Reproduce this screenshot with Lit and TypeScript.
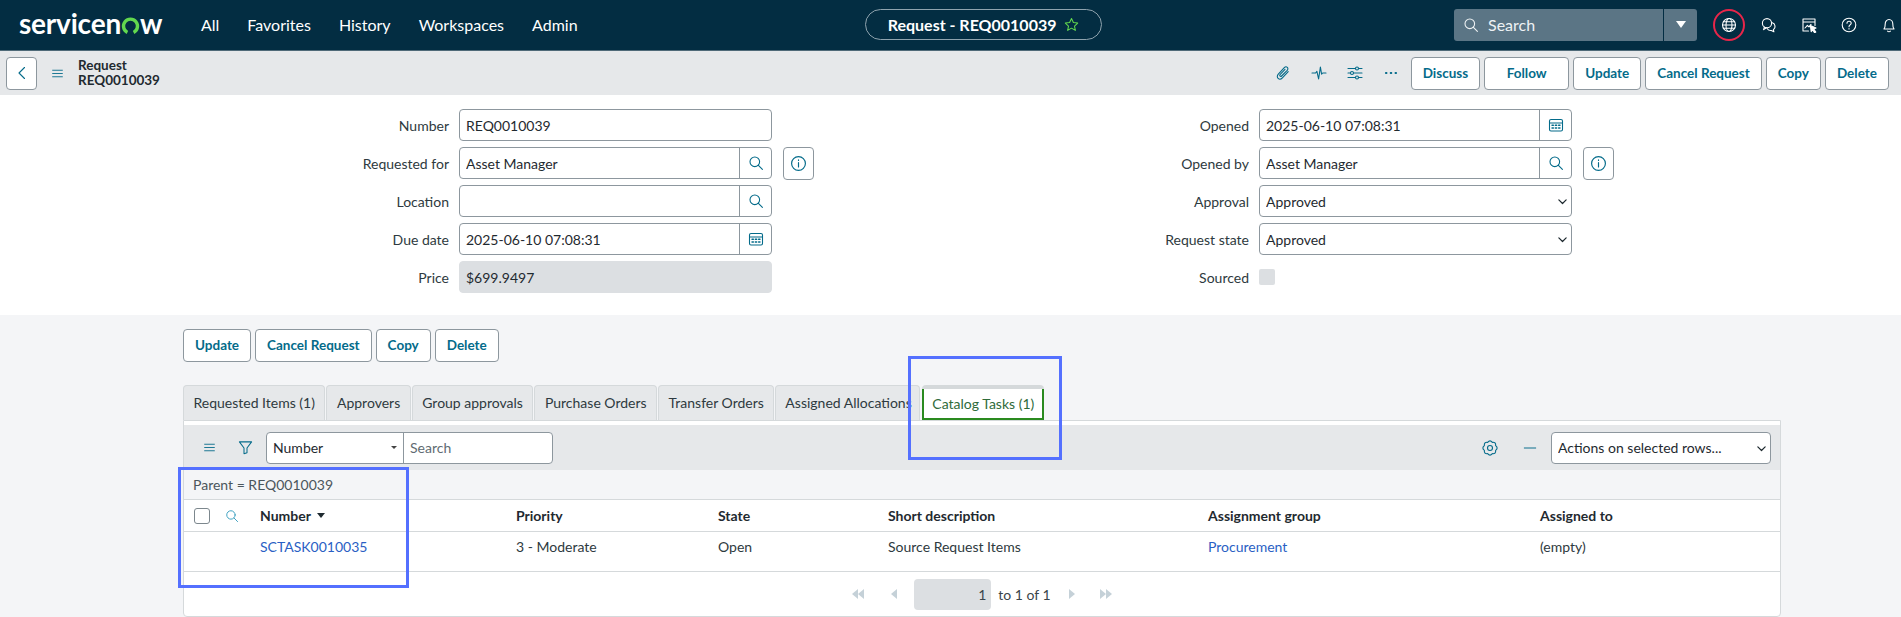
import { LitElement, html, css, svg } from 'lit';
import { customElement } from 'lit/decorators.js';

const ic = (body: unknown, size = 16, cls = '') => html`<svg class="ic ${cls}" width=${size} height=${size} viewBox="0 0 16 16" fill="none" stroke="currentColor" stroke-width="1.1" stroke-linecap="round" stroke-linejoin="round">${body}</svg>`;

// scalloped outline for the list settings icon
const gearPath = () => {
  const pt = (deg: number, r: number) => {
    const a = (deg * Math.PI) / 180;
    return `${(8 + r * Math.cos(a)).toFixed(2)} ${(8 + r * Math.sin(a)).toFixed(2)}`;
  };
  let d = `M${pt(-22.5, 6.1)}`;
  for (let i = 0; i < 8; i++) d += `Q${pt(i * 45, 8.6)} ${pt(i * 45 + 22.5, 6.1)}`;
  return d + 'Z';
};

const icons = {
  back: svg`<path d="M10.5 2.5 5 8l5.5 5.5"/>`,
  menu: svg`<path d="M2 4h12M2 8h12M2 12h12"/>`,
  search: svg`<circle cx="6.8" cy="6.8" r="4.8"/><path d="m10.4 10.4 4 4"/>`,
  calendar: svg`<rect x="1.5" y="2.5" width="13" height="11.5" rx="1.5"/><path d="M1.5 6h13"/><path d="M4 8.3h1.4M7.3 8.3h1.4M10.6 8.3H12M4 11h1.4M7.3 11h1.4M10.6 11H12" stroke-width="1.4"/>`,
  info: svg`<circle cx="8" cy="8" r="6.5"/><path d="M8 7.2v4M8 4.6v.5"/>`,
  clip: svg`<path d="M13.2 6.6 7.4 12.9c-1.3 1.4-3.2 1.5-4.3.5s-1.1-2.8.2-4.2l6-6.5c.9-1 2.2-1.1 3-.4s.8 2-.1 3L6.6 11c-.5.5-1.1.6-1.5.2s-.4-1-.1-1.5l5-5.4"/>`,
  pulse: svg`<path d="M1 8h3.6l1.3-1.6L7.6 14 9.4 2l1.2 7.2L11.7 8H15"/>`,
  sliders: svg`<path d="M1 3.5h7.5M11.5 3.5H15M1 8h2.5M6.5 8H15M1 12.5h7.5M11.5 12.5H15"/><circle cx="10" cy="3.5" r="1.5"/><circle cx="5" cy="8" r="1.5"/><circle cx="10" cy="12.5" r="1.5"/>`,
  more: svg`<path d="M3 8h.4M7.8 8h.4M12.6 8h.4" stroke-width="2.2"/>`,
  globe: svg`<circle cx="8" cy="8" r="6.5"/><ellipse cx="8" cy="8" rx="3" ry="6.5"/><path d="M1.5 8h13M2.4 4.8h11.2M2.4 11.2h11.2"/>`,
  chat: svg`<circle cx="6" cy="6.2" r="4.6"/><path d="M3.4 10 2.6 12.6 5.6 10.8"/><path d="M11.4 5.8a4 4 0 0 1 1 7l.5 2-2.6-1.3a4 4 0 0 1-4-1.8"/>`,
  win: svg`<path d="M7.5 14H2V2h12v6.5M2 5h12"/><path d="M4 11l2.4-2.6 1.6 1.4L10 7.4"/><path d="M9.4 8.6 15 11l-2.4.9L14.8 15l-1.2.8-2-3-1.4 1.8Z" fill="currentColor"/>`,
  help: svg`<circle cx="8" cy="8" r="6.8"/><path d="M6 6.2c0-2.6 4.2-2.6 4.2 0 0 1.7-2.2 1.7-2.2 3.5M8 11.6v.4"/>`,
  bell: svg`<path d="M3 12c1-1 1.2-2 1.2-5 0-2.5 1.6-4.5 3.8-4.5s3.8 2 3.8 4.5c0 3 .2 4 1.2 5Z"/><path d="M6.6 14.2c.7.7 2.1.7 2.8 0"/>`,
  star: svg`<path d="m8 1.6 2 4.3 4.6.6-3.4 3.2.9 4.6L8 11.9l-4.1 2.4.9-4.6-3.4-3.2 4.6-.6Z"/>`,
  filter: svg`<path d="M1.5 2h13L9.6 8.6v4.9L6.4 14.6V8.6Z"/>`,
  gear: svg`<path d=${gearPath()}/><circle cx="8" cy="8" r="2.5"/>`,
  minus: svg`<path d="M1.5 8h13"/>`,
  chevron: svg`<path d="m3.5 6 4.5 4.5L12.5 6" stroke-width="1.5"/>`,
};

const nav = ['All', 'Favorites', 'History', 'Workspaces', 'Admin'];
const topActions = ['Discuss', 'Follow', 'Update', 'Cancel Request', 'Copy', 'Delete'];
const bottomActions = ['Update', 'Cancel Request', 'Copy', 'Delete'];
const tabs = ['Requested Items (1)', 'Approvers', 'Group approvals', 'Purchase Orders', 'Transfer Orders', 'Assigned Allocations'];
const cols = ['Priority', 'State', 'Short description', 'Assignment group', 'Assigned to'];

@customElement('app-root')
export class AppRoot extends LitElement {
  static styles = css`
    :host {
      display: block;
      height: 617px;
      overflow: hidden;
      position: relative;
      background: #f4f5f7;
      font-family: Lato, "Open Sans", sans-serif;
      font-size: 14px;
      color: #2e3a40;
    }
    .ic { display: block; flex: none; }

    /* top bar */
    .top {
      height: 51px;
      box-sizing: border-box;
      background: #032d42;
      border-bottom: 1px solid #4f6a78;
      color: #fff;
      display: flex;
      align-items: center;
      padding: 0 0 1px 19px;
    }
    .logo {
      width: 148px;
      font-size: 28px;
      font-weight: 700;
      letter-spacing: -0.2px;
      display: flex;
      align-items: center;
      line-height: 1;
      margin-top: -3px;
    }
    .logo svg { margin: 4px 0 0 0; }
    .nav { display: flex; gap: 28px; margin-left: 34px; font-size: 16px; margin-top: -1px; }
    .pill {
      margin-left: 287px;
      width: 237px;
      height: 31px;
      box-sizing: border-box;
      border: 1px solid #8fa3ae;
      border-radius: 16px;
      display: flex;
      align-items: center;
      justify-content: center;
      gap: 7px;
      font-size: 16px;
      font-weight: 700;
    }
    .pill .ic { color: #62d84e; }
    .right { margin-left: auto; display: flex; align-items: center; }
    .search {
      width: 209px;
      height: 32px;
      box-sizing: border-box;
      background: #5b7585;
      border-radius: 3px 0 0 3px;
      display: flex;
      align-items: center;
      gap: 9px;
      padding-left: 9px;
      font-size: 16px;
      color: #eef2f4;
    }
    .search-more {
      width: 33px;
      height: 32px;
      margin-left: 1px;
      background: #5b7585;
      border-radius: 0 3px 3px 0;
      display: flex;
      align-items: center;
      justify-content: center;
    }
    .tri { width: 0; height: 0; border: 5px solid transparent; border-top: 7px solid #fff; border-bottom: 0; }
    .tools { display: flex; align-items: center; margin-left: 16px; gap: 24px; padding-right: 4px; }
    .globe {
      width: 32px;
      height: 32px;
      margin-right: -8px;
      box-sizing: border-box;
      border: 2px solid #e8264a;
      border-radius: 50%;
      display: flex;
      align-items: center;
      justify-content: center;
    }

    /* form header */
    .sub {
      height: 44px;
      background: #e6e8ea;
      display: flex;
      align-items: center;
      padding: 0 12px 0 6px;
      box-sizing: border-box;
    }
    .btn {
      height: 33px;
      box-sizing: border-box;
      padding: 0 11px 1px;
      border: 1px solid #8d979e;
      border-radius: 4px;
      background: #fff;
      color: #046b8a;
      font: 700 13.5px Lato, sans-serif;
    }
    .btn.wide { width: 85px; }
    .square {
      width: 31px;
      padding: 0;
      display: flex;
      align-items: center;
      justify-content: center;
    }
    .sub .menu { margin: 0 14px 0 14px; color: #046b8a; }
    .title { font-weight: 700; font-size: 13.5px; line-height: 15.5px; color: #1f2a30; }
    .sub-icons { margin-left: auto; display: flex; align-items: center; gap: 20px; margin-right: 12px; color: #046b8a; }
    .actions { display: flex; gap: 4px; }

    /* form */
    .form {
      background: #fff;
      padding: 14px 0 22px;
      display: grid;
      grid-template-columns: 950px 1fr;
    }
    .col { display: flex; flex-direction: column; gap: 6px; }
    .row { display: flex; align-items: center; height: 32px; }
    .row label { text-align: right; margin-right: 10px; flex: none; }
    .left label { width: 449px; }
    .rightcol label { width: 299px; }
    .ctl {
      position: relative;
      width: 313px;
      height: 32px;
      box-sizing: border-box;
      display: flex;
      border: 1px solid #8d979e;
      border-radius: 4px;
      background: #fff;
      overflow: hidden;
    }
    .ctl input, .ctl select {
      flex: 1;
      min-width: 0;
      border: 0;
      outline: 0;
      padding: 0 6px;
      background: none;
      font: 14px Lato, sans-serif;
      color: #1f2a30;
      appearance: none;
    }
    .ctl .add {
      width: 31px;
      border-left: 1px solid #8d979e;
      display: flex;
      align-items: center;
      justify-content: center;
      color: #046b8a;
    }
    .ctl .caret { position: absolute; right: 2px; top: 9px; color: #1f2a30; }
    .ctl.off { background: #dcdfe2; border-color: #dcdfe2; }
    .info { margin-left: 11px; color: #046b8a; }
    .check { width: 16px; height: 16px; background: #dcdfe2; border-radius: 2px; }

    /* related lists */
    .lower { padding: 14px 120px 0 183px; }
    .lower .actions { gap: 4px; margin-bottom: 23px; }
    .tabs { display: flex; gap: 1px; height: 35px; }
    .tab {
      padding: 0 9.5px 1px;
      display: flex;
      align-items: center;
      white-space: nowrap;
      background: #e6e8ea;
      border: 1px solid #d5d9db;
      border-bottom: 0;
      border-radius: 4px 4px 0 0;
      box-sizing: border-box;
    }
    .tab:nth-child(6) { width: 145px; padding: 0 0 1px 9px; }
    .tab.on { padding: 4px 0 0; background: #d5d9db; border: 0; margin-left: 1px; }
    .tab.on span {
      height: 100%;
      padding: 0 8px 1px;
      box-sizing: border-box;
      display: flex;
      align-items: center;
      background: #fff;
      border: 2px solid #2a8a1f;
      border-top: 0;
      color: #2f6b3a;
    }
    .panel {
      padding-top: 4px;
      background: #fff;
      border: 1px solid #d5d9db;
      border-radius: 0 0 4px 4px;
    }
    .bar {
      height: 45px;
      box-sizing: border-box;
      background: #e6e8ea;
      display: flex;
      align-items: center;
      padding: 0 9px 0 19px;
      color: #046b8a;
    }
    .gap { width: 22px; }
    .combo {
      margin-left: 13px;
      width: 287px;
      height: 32px;
      box-sizing: border-box;
      display: flex;
      background: #fff;
      border: 1px solid #8d979e;
      border-radius: 4px;
      color: #1f2a30;
    }
    .combo .field { width: 137px; padding: 0 6px; display: flex; align-items: center; justify-content: space-between; border-right: 1px solid #8d979e; box-sizing: border-box; }
    .combo .mini { width: 0; height: 0; border: 3px solid transparent; border-top: 3px solid #444; border-bottom: 0; }
    .combo .q { padding-left: 6px; display: flex; align-items: center; color: #5f6b72; }
    .bar .side { margin-left: auto; display: flex; align-items: center; gap: 14px; }
    .bar .side .cog { margin-right: 11px; }
    .bar .ctl { width: 220px; }
    .crumb {
      height: 30px;
      box-sizing: border-box;
      background: #f4f5f7;
      display: flex;
      align-items: center;
      padding-left: 9px;
      color: #4b565c;
      border-bottom: 1px solid #d5d9db;
    }
    .grid {
      display: grid;
      grid-template-columns: 76px 256px 202px 170px 320px 332px 1fr;
      align-items: center;
      border-bottom: 1px solid #d5d9db;
      box-sizing: border-box;
    }
    .grid.head { height: 32px; font-weight: 700; color: #1f2a30; }
    .grid.data { height: 40px; align-items: start; padding-top: 6px; }
    .lead { display: flex; align-items: center; padding-left: 10px; gap: 15px; color: #3a9fc0; }
    .box { width: 16px; height: 16px; box-sizing: border-box; border: 1.5px solid #7c878d; border-radius: 3px; background: #fff; }
    .sort { display: flex; align-items: center; gap: 6px; }
    .sort i { width: 0; height: 0; border: 4px solid transparent; border-top: 5px solid #1f2a30; border-bottom: 0; }
    a { color: #2a5fc4; text-decoration: none; }
    .pager { height: 44px; display: flex; align-items: center; justify-content: center; color: #3a454b; }
    .pg { color: #c5d1d8; display: flex; }
    .pg b { width: 0; height: 0; border: 5px solid transparent; border-left: 0; border-right: 6px solid currentColor; }
    .pg.fwd b { border-right: 0; border-left: 6px solid currentColor; }
    .pg.s1 { margin-left: 27px; }
    .pg.s2 { margin-left: 18px; }
    .pg.s3 { margin-left: 25px; }
    .page-no {
      width: 77px;
      height: 31px;
      margin: 0 7px 0 17px;
      padding-right: 5px;
      box-sizing: border-box;
      background: #dcdfe2;
      border-radius: 4px;
      display: flex;
      align-items: center;
      justify-content: flex-end;
    }

    /* annotation boxes drawn over the screenshot */
    .mark { position: absolute; box-sizing: border-box; border: 3px solid #5470ff; }
    .mark.a { left: 908px; top: 356px; width: 154px; height: 104px; }
    .mark.b { left: 178px; top: 467px; width: 231px; height: 121px; }
  `;

  private field(label: string, value: string, add?: unknown, info = false, off = false) {
    return html`<div class="row">
      <label>${label}</label>
      <div class="ctl ${off ? 'off' : ''}">
        <input .value=${value} readonly />
        ${add ? html`<div class="add">${ic(add)}</div>` : ''}
      </div>
      ${info ? html`<button class="btn square info">${ic(icons.info, 17)}</button>` : ''}
    </div>`;
  }

  private choice(label: string, value: string) {
    return html`<div class="row">
      <label>${label}</label>
      <div class="ctl">
        <select><option>${value}</option></select>
        <div class="caret">${ic(icons.chevron, 13)}</div>
      </div>
    </div>`;
  }

  render() {
    return html`
      <header class="top">
        <div class="logo">servicen<svg width="19" height="17" viewBox="0 0 19 17"><path d="M6.4 15.4a7 7 0 1 1 6.2 0" fill="none" stroke="#62d84e" stroke-width="3.4" /></svg>w</div>
        <nav class="nav">${nav.map((n) => html`<span>${n}</span>`)}</nav>
        <div class="pill">Request - REQ0010039 ${ic(icons.star, 15)}</div>
        <div class="right">
          <div class="search">${ic(icons.search, 16)}Search</div>
          <div class="search-more"><div class="tri"></div></div>
          <div class="tools">
            <div class="globe">${ic(icons.globe, 16)}</div>
            ${ic(icons.chat)} ${ic(icons.win)} ${ic(icons.help)} ${ic(icons.bell)}
          </div>
        </div>
      </header>

      <div class="sub">
        <button class="btn square">${ic(icons.back)}</button>
        <div class="menu">${ic(icons.menu, 13)}</div>
        <div class="title">Request<br />REQ0010039</div>
        <div class="sub-icons">
          ${ic(icons.clip)} ${ic(icons.pulse)} ${ic(icons.sliders)} ${ic(icons.more)}
        </div>
        <div class="actions">
          ${topActions.map((a) => html`<button class="btn ${a === 'Follow' ? 'wide' : ''}">${a}</button>`)}
        </div>
      </div>

      <section class="form">
        <div class="col left">
          ${this.field('Number', 'REQ0010039')}
          ${this.field('Requested for', 'Asset Manager', icons.search, true)}
          ${this.field('Location', '', icons.search)}
          ${this.field('Due date', '2025-06-10 07:08:31', icons.calendar)}
          ${this.field('Price', '$699.9497', undefined, false, true)}
        </div>
        <div class="col rightcol">
          ${this.field('Opened', '2025-06-10 07:08:31', icons.calendar)}
          ${this.field('Opened by', 'Asset Manager', icons.search, true)}
          ${this.choice('Approval', 'Approved')}
          ${this.choice('Request state', 'Approved')}
          <div class="row"><label>Sourced</label><div class="check"></div></div>
        </div>
      </section>

      <section class="lower">
        <div class="actions">${bottomActions.map((a) => html`<button class="btn">${a}</button>`)}</div>
        <div class="tabs">
          ${tabs.map((t) => html`<div class="tab">${t}</div>`)}
          <div class="tab on"><span>Catalog Tasks (1)</span></div>
        </div>
        <div class="panel">
          <div class="bar">
            ${ic(icons.menu, 13)}
            <div class="gap"></div>
            ${ic(icons.filter, 15)}
            <div class="combo">
              <div class="field">Number<span class="mini"></span></div>
              <div class="q">Search</div>
            </div>
            <div class="side">
              ${ic(icons.gear, 16, 'cog')} ${ic(icons.minus, 14)}
              <div class="ctl">
                <select><option>Actions on selected rows...</option></select>
                <div class="caret">${ic(icons.chevron, 13)}</div>
              </div>
            </div>
          </div>
          <div class="crumb">Parent = REQ0010039</div>
          <div class="grid head">
            <div class="lead"><div class="box"></div>${ic(icons.search, 14)}</div>
            <div class="sort">Number<i></i></div>
            ${cols.map((c) => html`<div>${c}</div>`)}
          </div>
          <div class="grid data">
            <div></div>
            <div><a href="#">SCTASK0010035</a></div>
            <div>3 - Moderate</div>
            <div>Open</div>
            <div>Source Request Items</div>
            <div><a href="#">Procurement</a></div>
            <div>(empty)</div>
          </div>
          <div class="pager">
            <div class="pg"><b></b><b></b></div>
            <div class="pg s1"><b></b></div>
            <div class="page-no">1</div>
            to 1 of 1
            <div class="pg fwd s2"><b></b></div>
            <div class="pg fwd s3"><b></b><b></b></div>
          </div>
        </div>
      </section>

      <div class="mark a"></div>
      <div class="mark b"></div>
    `;
  }
}
